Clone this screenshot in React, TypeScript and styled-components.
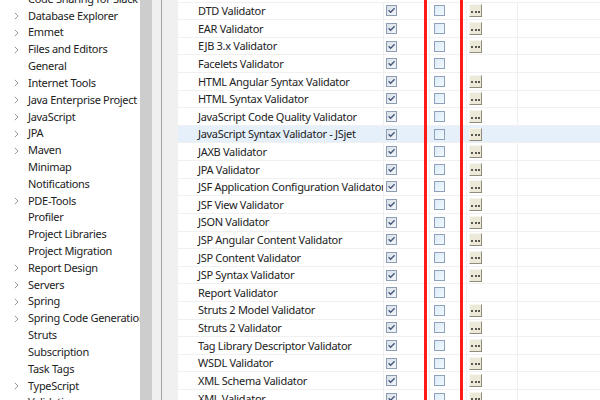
import React from 'react';
import styled, { createGlobalStyle } from 'styled-components';

const Global = createGlobalStyle`
  html, body { margin: 0; padding: 0; background: #fff; }
  body {
    font-family: "Noto Sans", "Noto Sans CJK SC", sans-serif;
    font-size: 11px;
    letter-spacing: -0.3px;
    color: #222;
  }
`;

const Page = styled.div`
  display: flex;
  width: 600px;
  height: 400px;
  overflow: hidden;
`;

const Tree = styled.div`
  width: 140px;
  flex: none;
  overflow: hidden;
  background: #fff;
`;

const TreeList = styled.ul`
  list-style: none;
  margin: -9.2px 0 0;
  padding: 0;
`;

const TreeItem = styled.li`
  display: flex;
  align-items: center;
  height: 16.82px;
  line-height: 16.82px;
  white-space: nowrap;
`;

const Twisty = styled.span`
  width: 28px;
  flex: none;
  display: flex;
  align-items: center;
  padding-left: 14px;
  box-sizing: border-box;
`;

const ScrollThumb = styled.div`
  width: 12px;
  flex: none;
  background: #cdcdcd;
`;

const Track = styled.div`
  width: 9px;
  flex: none;
  background: #f0f0f0;
`;

const Divider = styled.div`
  width: 1px;
  flex: none;
  background: #a3a3a3;
`;

const Gutter = styled.div`
  width: 16px;
  flex: none;
  background: #f0f0f0;
`;

const Table = styled.div`
  position: relative;
  flex: 1;
  background: #fff;
  padding-top: 1.6px;
`;

const Row = styled.div<{ $hl?: boolean }>`
  display: grid;
  grid-template-columns: 206px 46px 37px 51px 1fr;
  height: 17.62px;
  box-sizing: border-box;
  border-top: 1px solid #f0f0f0;
  background: ${(p) => (p.$hl ? '#e5f0fb' : '#fff')};
`;

const Cell = styled.div<{ $pad: number; $line?: boolean }>`
  display: flex;
  align-items: center;
  padding-left: ${(p) => p.$pad}px;
  border-right: ${(p) => (p.$line ? '1px solid #eceff3' : 'none')};
  white-space: nowrap;
  overflow: hidden;
  line-height: 16.62px;
`;

const NameText = styled.span`
  color: #222;
  padding-top: 1px;
`;

const Ellipsis = styled.span`
  position: relative;
  width: 13px;
  height: 13px;
  box-sizing: border-box;
  background: #ece9d8;
  border-top: 1px solid #f7f6ef;
  border-left: 1px solid #f7f6ef;
  border-right: 1px solid #8f8c7c;
  border-bottom: 1px solid #8f8c7c;
  display: flex;
  align-items: center;
  justify-content: center;
  gap: 1.3px;
  padding-top: 2px;
`;

const Dot = styled.span`
  width: 2px;
  height: 2px;
  background: #5c5a50;
`;

const RedBox = styled.div`
  position: absolute;
  left: 246px;
  width: 39px;
  top: -10px;
  bottom: -10px;
  box-sizing: border-box;
  border-left: 3px solid #ff1a1a;
  border-right: 3px solid #ff1a1a;
  pointer-events: none;
`;

const Chevron = () => (
  <svg width="5" height="8" viewBox="0 0 5 8">
    <path d="M0.8 0.8 L4 4 L0.8 7.2" fill="none" stroke="#9a9a9a" strokeWidth="1" />
  </svg>
);

const CheckBox = ({ checked }: { checked: boolean }) => (
  <svg width="11" height="11" viewBox="0 0 11 11">
    <defs>
      <linearGradient id="cbOn" x1="0" y1="0" x2="1" y2="1">
        <stop offset="0" stopColor="#d9e0e9" />
        <stop offset="1" stopColor="#f4f6f9" />
      </linearGradient>
      <linearGradient id="cbOff" x1="0" y1="0" x2="1" y2="1">
        <stop offset="0" stopColor="#dcecf8" />
        <stop offset="1" stopColor="#f2f9fe" />
      </linearGradient>
    </defs>
    <rect
      x="0.5"
      y="0.5"
      width="10"
      height="10"
      fill={checked ? 'url(#cbOn)' : 'url(#cbOff)'}
      stroke={checked ? '#8d9db4' : '#8ea3bb'}
    />
    {checked && (
      <path d="M2.6 5.2 L4.6 7.3 L8.6 3.2" fill="none" stroke="#44577c" strokeWidth="1.3" />
    )}
  </svg>
);

const treeItems: { label: string; arrow: boolean }[] = [
  { label: 'Code Sharing for Slack', arrow: false },
  { label: 'Database Explorer', arrow: true },
  { label: 'Emmet', arrow: true },
  { label: 'Files and Editors', arrow: true },
  { label: 'General', arrow: false },
  { label: 'Internet Tools', arrow: true },
  { label: 'Java Enterprise Project', arrow: true },
  { label: 'JavaScript', arrow: true },
  { label: 'JPA', arrow: true },
  { label: 'Maven', arrow: true },
  { label: 'Minimap', arrow: false },
  { label: 'Notifications', arrow: false },
  { label: 'PDE-Tools', arrow: true },
  { label: 'Profiler', arrow: false },
  { label: 'Project Libraries', arrow: false },
  { label: 'Project Migration', arrow: false },
  { label: 'Report Design', arrow: true },
  { label: 'Servers', arrow: true },
  { label: 'Spring', arrow: true },
  { label: 'Spring Code Generation', arrow: true },
  { label: 'Struts', arrow: false },
  { label: 'Subscription', arrow: false },
  { label: 'Task Tags', arrow: false },
  { label: 'TypeScript', arrow: true },
  { label: 'Validation', arrow: false },
];

const validators: { name: string; btn: boolean; hl?: boolean }[] = [
  { name: 'DTD Validator', btn: true },
  { name: 'EAR Validator', btn: true },
  { name: 'EJB 3.x Validator', btn: true },
  { name: 'Facelets Validator', btn: false },
  { name: 'HTML Angular Syntax Validator', btn: true },
  { name: 'HTML Syntax Validator', btn: true },
  { name: 'JavaScript Code Quality Validator', btn: true },
  { name: 'JavaScript Syntax Validator - JSjet', btn: true, hl: true },
  { name: 'JAXB Validator', btn: true },
  { name: 'JPA Validator', btn: true },
  { name: 'JSF Application Configuration Validator', btn: true },
  { name: 'JSF View Validator', btn: true },
  { name: 'JSON Validator', btn: true },
  { name: 'JSP Angular Content Validator', btn: true },
  { name: 'JSP Content Validator', btn: true },
  { name: 'JSP Syntax Validator', btn: true },
  { name: 'Report Validator', btn: false },
  { name: 'Struts 2 Model Validator', btn: true },
  { name: 'Struts 2 Validator', btn: true },
  { name: 'Tag Library Descriptor Validator', btn: true },
  { name: 'WSDL Validator', btn: true },
  { name: 'XML Schema Validator', btn: true },
  { name: 'XML Validator', btn: true },
];

export default function App() {
  return (
    <>
      <Global />
      <Page>
        <Tree>
          <TreeList>
            {treeItems.map((t) => (
              <TreeItem key={t.label}>
                <Twisty>{t.arrow && <Chevron />}</Twisty>
                {t.label}
              </TreeItem>
            ))}
          </TreeList>
        </Tree>
        <ScrollThumb />
        <Track />
        <Divider />
        <Gutter />
        <Table>
          {validators.map((v) => (
            <Row key={v.name} $hl={v.hl}>
              <Cell $pad={20} $line>
                <NameText>{v.name}</NameText>
              </Cell>
              <Cell $pad={2} $line>
                <CheckBox checked />
              </Cell>
              <Cell $pad={4} $line>
                <CheckBox checked={false} />
              </Cell>
              <Cell $pad={2} $line>
                {v.btn && (
                  <Ellipsis>
                    <Dot />
                    <Dot />
                    <Dot />
                  </Ellipsis>
                )}
              </Cell>
              <Cell $pad={0} />
            </Row>
          ))}
          <RedBox />
        </Table>
      </Page>
    </>
  );
}
